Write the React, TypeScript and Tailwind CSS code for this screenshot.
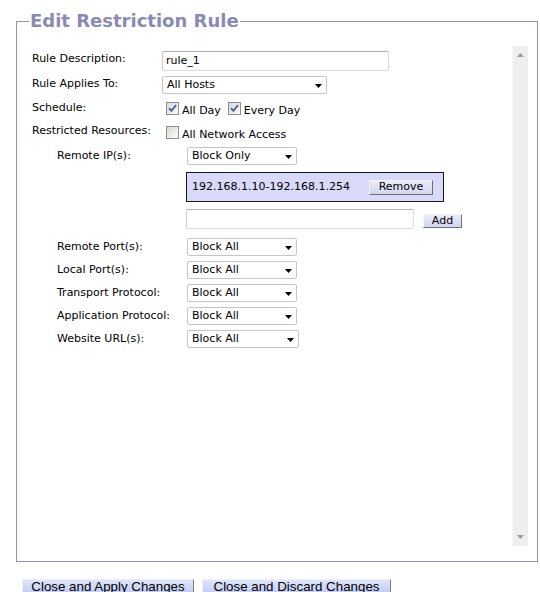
import React from "react";

function Arrow() {
  return (
    <svg width="7" height="4" viewBox="0 0 7 4" className="mt-[2px] shrink-0">
      <polygon points="0,0 7,0 3.5,4" fill="#000" />
    </svg>
  );
}

function Select({ className, text }: { className: string; text: string }) {
  return (
    <div
      className={`${className} h-[18px] flex items-center justify-between pl-[4px] pr-[4px] bg-white border border-[#c6c6c6] rounded-[2px]`}
    >
      <span>{text}</span>
      <Arrow />
    </div>
  );
}

function Checkbox({ checked, className }: { checked: boolean; className: string }) {
  return (
    <div
      className={`${className} relative w-[13px] h-[13px] shrink-0 border border-[#8e8f8f] bg-linear-to-br from-[#d8d8d4] to-[#fbfbfb]`}
    >
      {checked && (
        <svg width="11" height="11" viewBox="0 0 11 11" className="absolute left-0 top-0">
          <path d="M2 5.2 L4.4 7.8 L9 2.2" fill="none" stroke="#4d5fa6" strokeWidth="1.9" />
        </svg>
      )}
    </div>
  );
}

function SubRow({ label, children, className }: { label: string; children: React.ReactNode; className: string }) {
  return (
    <div className={`${className} flex items-start pl-[25px]`}>
      <div className="w-[130px] mt-[2px] shrink-0">{label}</div>
      {children}
    </div>
  );
}

export default function App() {
  return (
    <div className="w-[540px] h-[592px] bg-white overflow-hidden font-['DejaVu_Sans',Verdana,sans-serif] text-[11px] leading-[14px] text-black">
      <fieldset className="ml-[16px] mt-[9px] w-[522px] border border-[#9292bc] pl-[12px] pr-[9px] pt-[13px] pb-[15px]">
        <legend className="px-[1px] text-[18px] leading-[24px] font-bold text-[#8a8ab6]">
          Edit Restriction Rule
        </legend>
        <div className="flex h-[500px]">
          <div className="flex-1 pl-[3px]">
            {/* Rule Description */}
            <div className="mt-[5px] flex items-start">
              <div className="w-[130px] mt-[1px] shrink-0">Rule Description:</div>
              <div className="w-[227px] h-[20px] flex items-center pl-[3px] bg-white border border-[#dadbe2] border-t-[#abadb3] border-l-[#c8c9cf] rounded-[2px]">
                rule_1
              </div>
            </div>
            {/* Rule Applies To */}
            <div className="mt-[5px] flex items-start">
              <div className="w-[130px] mt-[1px] shrink-0">Rule Applies To:</div>
              <Select className="w-[165px]" text="All Hosts" />
            </div>
            {/* Schedule */}
            <div className="mt-[7px] flex items-start">
              <div className="w-[130px] shrink-0">Schedule:</div>
              <Checkbox checked className="ml-[4px] mt-[1px]" />
              <span className="ml-[3px] mt-[3px]">All Day</span>
              <Checkbox checked className="ml-[7px] mt-[1px]" />
              <span className="ml-[3px] mt-[3px]">Every Day</span>
            </div>
            {/* Restricted Resources */}
            <div className="mt-[6px] flex items-start">
              <div className="w-[130px] shrink-0">Restricted Resources:</div>
              <Checkbox checked={false} className="ml-[4px] mt-[2px]" />
              <span className="ml-[3px] mt-[4px]">All Network Access</span>
            </div>
            <SubRow label="Remote IP(s):" className="mt-[5px]">
              <Select className="w-[110px]" text="Block Only" />
            </SubRow>
            <div className="mt-[7px] flex pl-[154px]">
              <div className="w-[258px] h-[30px] flex items-center justify-between pl-[5px] pr-[10px] bg-[#d9d9f9] border border-[#1a1a1a]">
                <span>192.168.1.10-192.168.1.254</span>
                <button className="w-[64px] h-[15px] flex items-center justify-center bg-linear-to-b from-[#e9ebf8] to-[#d3d7ef] border border-[#f4f5fc] border-r-[#6f6f6f] border-b-[#6f6f6f] text-[11px] leading-[14px] text-black">
                  Remove
                </button>
              </div>
            </div>
            <div className="mt-[7px] flex items-start pl-[154px]">
              <div className="w-[228px] h-[20px] bg-white border border-[#dadbe2] border-t-[#b4b6bc] border-l-[#cdced4] rounded-[2px]" />
              <button className="ml-[9px] mt-[5px] w-[39px] h-[14px] flex items-center justify-center bg-linear-to-b from-[#e9ebf8] to-[#d3d7ef] border border-[#f4f5fc] border-r-[#6f6f6f] border-b-[#6f6f6f] text-[11px] leading-[14px] text-black">
                Add
              </button>
            </div>
            <SubRow label="Remote Port(s):" className="mt-[9px]">
              <Select className="w-[110px]" text="Block All" />
            </SubRow>
            <SubRow label="Local Port(s):" className="mt-[5px]">
              <Select className="w-[110px]" text="Block All" />
            </SubRow>
            <SubRow label="Transport Protocol:" className="mt-[5px]">
              <Select className="w-[110px]" text="Block All" />
            </SubRow>
            <SubRow label="Application Protocol:" className="mt-[5px]">
              <Select className="w-[110px]" text="Block All" />
            </SubRow>
            <SubRow label="Website URL(s):" className="mt-[5px]">
              <Select className="w-[112px]" text="Block All" />
            </SubRow>
          </div>
          <div className="w-[16px] shrink-0 bg-[#eeeeee] border-l border-[#f7f7f7] flex flex-col items-center justify-between pt-[7px] pb-[7px]">
            <svg width="7" height="4" viewBox="0 0 7 4">
              <polygon points="3.5,0 7,4 0,4" fill="#9a9a9a" />
            </svg>
            <svg width="7" height="4" viewBox="0 0 7 4">
              <polygon points="0,0 7,0 3.5,4" fill="#9a9a9a" />
            </svg>
          </div>
        </div>
      </fieldset>
      <div className="flex gap-[8px] ml-[22px] mt-[17px] font-['Liberation_Sans',Arial,sans-serif] text-[13.33px] leading-[14px]">
        <button className="w-[172px] h-[20px] flex items-start justify-center bg-linear-to-b from-[#dfe5fb] to-[#b7c3ee] border border-[#eef1fd] border-r-[#7d7d7d] border-b-[#7d7d7d] text-black">
          Close and Apply Changes
        </button>
        <button className="w-[189px] h-[20px] flex items-start justify-center bg-linear-to-b from-[#dfe5fb] to-[#b7c3ee] border border-[#eef1fd] border-r-[#7d7d7d] border-b-[#7d7d7d] text-black">
          Close and Discard Changes
        </button>
      </div>
    </div>
  );
}
